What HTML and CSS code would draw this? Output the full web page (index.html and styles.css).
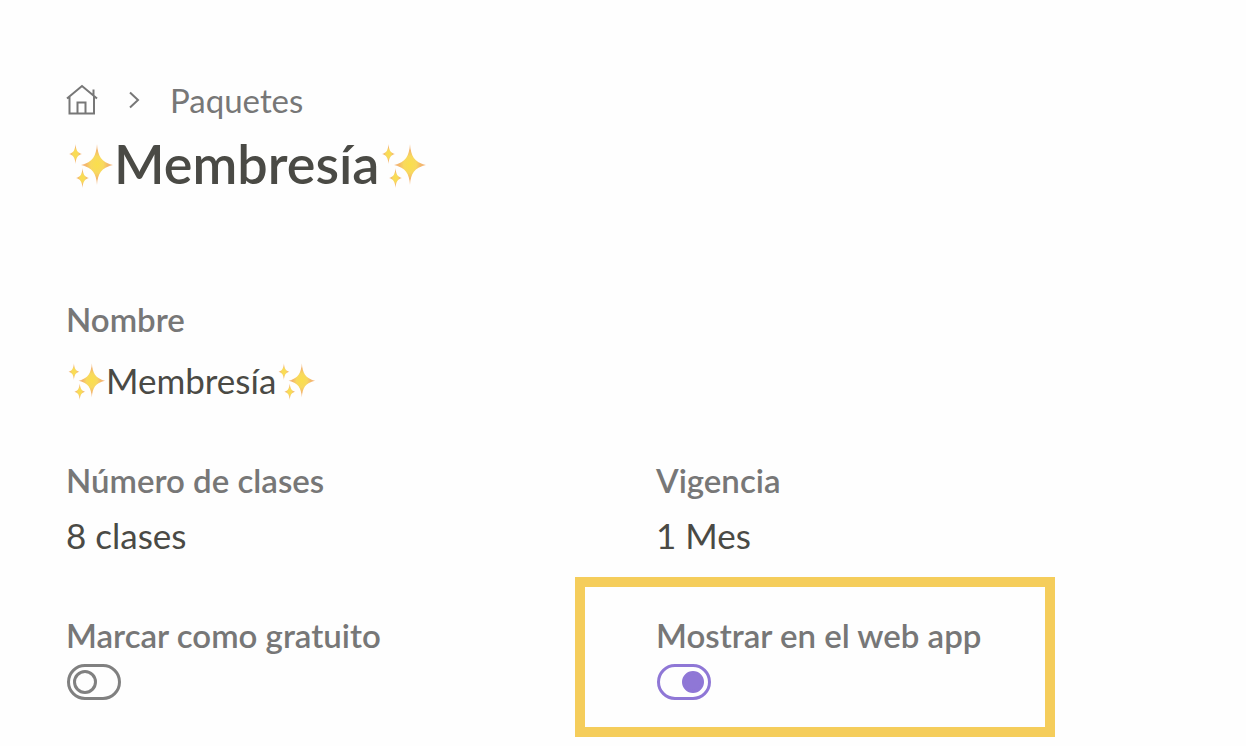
FILE: index.html
```html
<!DOCTYPE html>
<html lang="es">
<head>
  <meta charset="UTF-8" />
  <meta name="viewport" content="width=device-width, initial-scale=1" />
  <title>Membresía - Paquetes</title>
  <link rel="stylesheet" href="styles.css">
</head>
<body>

  <svg class="sprite" aria-hidden="true">
    <defs>
      <radialGradient id="gold">
        <stop offset="0" stop-color="#fadf4c" />
        <stop offset="0.400" stop-color="#f8d95e" />
        <stop offset="0.700" stop-color="#f3b56c" />
        <stop offset="1" stop-color="#f6c9a0" />
      </radialGradient>
    </defs>
    <symbol id="sparkles" viewBox="0 0 48 48">
      <g>
        <path fill="url(#gold)" d="M31 4C32 16 35 22 47 25C35 28 32 33 31 45C30 33 27 28 15 25C27 22 30 16 31 4Z" />
        <path fill="url(#gold)" d="M9.500 4C10 10 11.500 13 16 14C11.500 15 10 18 9.500 24C9 18 7.500 15 3 14C7.500 13 9 10 9.500 4Z" />
        <path fill="url(#gold)" d="M16.500 28C17 34 18.500 37 23 38C18.500 39 17 42 16.500 48C16 42 14.500 39 10 38C14.500 37 16 34 16.500 28Z" />
      </g>
    </symbol>
  </svg>

  <main class="page">
    <nav class="breadcrumb" aria-label="Ruta">
      <a href="#inicio" aria-label="Inicio">
        <svg class="icon-home" viewBox="0 0 32 32">
          <path d="M1 14.500L16 2L31 14.500M3.500 12.500V29.500H28V12M27.500 11.500V5.500M11.500 29.500V18.500H19.500V29.500" />
        </svg>
      </a>
      <svg class="icon-chevron" viewBox="0 0 12 18" aria-hidden="true">
        <path d="M2 1.500L10 9L2 16.500" />
      </svg>
      <a href="#paquetes">Paquetes</a>
    </nav>

    <h1 class="title">
      <svg class="sparkles" aria-hidden="true"><use href="#sparkles" /></svg>
      <span>Membresía</span>
      <svg class="sparkles" aria-hidden="true"><use href="#sparkles" /></svg>
    </h1>

    <div class="fields">
      <div class="field field-name">
        <h2 class="label">Nombre</h2>
        <p class="value">
          <svg class="sparkles" aria-hidden="true"><use href="#sparkles" /></svg>
          <span>Membresía</span>
          <svg class="sparkles" aria-hidden="true"><use href="#sparkles" /></svg>
        </p>
      </div>

      <div class="field">
        <h2 class="label">Número de clases</h2>
        <p class="value">8 clases</p>
      </div>
      <div class="field">
        <h2 class="label">Vigencia</h2>
        <p class="value">1 Mes</p>
      </div>

      <div class="field">
        <label class="label" for="gratuito">Marcar como gratuito</label>
        <input class="switch" type="checkbox" role="switch" id="gratuito" />
      </div>
      <div class="field highlight">
        <label class="label" for="web-app">Mostrar en el web app</label>
        <input class="switch" type="checkbox" role="switch" id="web-app" checked />
      </div>
    </div>
  </main>

</body>
</html>
```
FILE: styles.css
```css
*,
*::before,
*::after {
  box-sizing: border-box;
}
body {
  margin: 0;
  background-color: #fefefe;
  color: #4a4a45;
  font-family: Lato, sans-serif;
}
.sprite {
  position: absolute;
  width: 0;
  height: 0;
}
.page {
  min-height: 100vh;
  padding: 80px 0 40px 66px;
}
.breadcrumb {
  display: flex;
  align-items: center;
  height: 40px;
  color: #777;
  font-size: 33px;
  line-height: 36px;
}
.breadcrumb a {
  color: inherit;
  text-decoration: none;
}
.breadcrumb svg {
  display: block;
  fill: none;
  stroke: #777;
}
.icon-home {
  width: 32px;
  height: 32px;
  stroke-width: 2;
}
.icon-chevron {
  width: 12px;
  height: 18px;
  margin: 0 30px;
  stroke-width: 2;
}
.title {
  display: flex;
  align-items: center;
  margin: 12px 0 0;
  font-size: 54px;
  font-weight: 600;
  line-height: 64px;
}
.title .sparkles {
  width: 48px;
  height: 48px;
}
.fields {
  display: grid;
  grid-template-columns: 1fr 1fr;
  row-gap: 60px;
  margin-top: 103px;
}
.field-name {
  grid-column: 1 / -1;
}
.label {
  display: block;
  margin: 0;
  color: #777;
  font-size: 33px;
  font-weight: 600;
  line-height: 40px;
}
.value {
  display: flex;
  align-items: center;
  margin: 15px 0 0;
  font-size: 35px;
  line-height: 40px;
}
.field-name .value {
  margin-top: 21px;
}
.value .sparkles {
  width: 40px;
  height: 40px;
}
.switch {
  display: flex;
  align-items: center;
  width: 54px;
  height: 36px;
  margin: 9px 0 0 1px;
  padding: 0 3px;
  appearance: none;
  border: 3px solid #808080;
  border-radius: 18px;
  cursor: pointer;
}
.switch::before {
  content: "";
  width: 24px;
  height: 24px;
  border: 3px solid #808080;
  border-radius: 50%;
}
.switch:checked {
  justify-content: flex-end;
  padding: 0 4px;
  border-color: #8f77d6;
}
.switch:checked::before {
  width: 22px;
  height: 22px;
  border-color: #8f77d6;
  background-color: #8f77d6;
}
.highlight {
  position: relative;
}
/* frame drawn around the option, on top of the grid */
.highlight::after {
  content: "";
  position: absolute;
  top: -38px;
  left: -81px;
  width: 480px;
  height: 160px;
  border: 10px solid #f5cd5b;
  pointer-events: none;
}
```
